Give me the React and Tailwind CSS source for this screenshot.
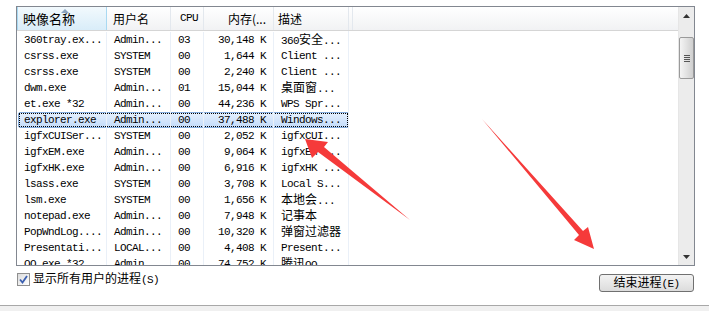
import React from 'react';

const MONO = "font-['Liberation_Mono','Noto_Sans_CJK_SC',monospace]";
const CJK = "font-['Noto_Sans_CJK_SC',sans-serif]";

// split text into latin / CJK runs so each gets its own font size
function Txt({ s }) {
  const parts = s.split(/([\u4e00-\u9fff]+)/);
  return parts.map((p, i) =>
    /[\u4e00-\u9fff]/.test(p) ? (
      <span key={i} className={`${CJK} text-[12px] tracking-normal`}>{p}</span>
    ) : (
      <span key={i}>{p}</span>
    )
  );
}

const rows = [
  ['360tray.ex...', 'Admin...', '03', '30,148 K', '360安全...'],
  ['csrss.exe', 'SYSTEM', '00', '1,644 K', 'Client ...'],
  ['csrss.exe', 'SYSTEM', '00', '2,240 K', 'Client ...'],
  ['dwm.exe', 'Admin...', '01', '15,044 K', '桌面窗...'],
  ['et.exe *32', 'Admin...', '00', '44,236 K', 'WPS Spr...'],
  ['explorer.exe', 'Admin...', '00', '37,488 K', 'Windows...'],
  ['igfxCUISer...', 'SYSTEM', '00', '2,052 K', 'igfxCUI...'],
  ['igfxEM.exe', 'Admin...', '00', '9,064 K', 'igfxEM ...'],
  ['igfxHK.exe', 'Admin...', '00', '6,916 K', 'igfxHK ...'],
  ['lsass.exe', 'SYSTEM', '00', '3,708 K', 'Local S...'],
  ['lsm.exe', 'SYSTEM', '00', '1,656 K', '本地会...'],
  ['notepad.exe', 'Admin...', '00', '7,948 K', '记事本'],
  ['PopWndLog....', 'Admin...', '00', '10,320 K', '弹窗过滤器'],
  ['Presentati...', 'LOCAL...', '00', '4,408 K', 'Present...'],
  ['QQ.exe *32', 'Admin...', '00', '74,752 K', '腾讯QQ'],
];

function Row({ r, selected }) {
  return (
    <div className="relative flex h-[16px] shrink-0 items-center text-[11px] tracking-[-0.6px] text-black">
      {selected && (
        <div className="absolute left-[1px] top-0 h-[16px] w-[331px] rounded-[2px] border border-[#84acdd] bg-linear-to-b from-[#e4effd] to-[#c4dcfa]">
          <div className="h-full w-full border border-dotted border-black" />
        </div>
      )}
      <div className="relative w-[90px] shrink-0 border-r border-[#eaf0f8] pl-[7px] leading-[16px]"><Txt s={r[0]} /></div>
      <div className="relative w-[64px] shrink-0 border-r border-[#eaf0f8] pl-[7px] leading-[16px]">{r[1]}</div>
      <div className="relative w-[33px] shrink-0 border-r border-[#eaf0f8] pl-[7px] leading-[16px]">{r[2]}</div>
      <div className="relative w-[70px] shrink-0 border-r border-[#eaf0f8] pr-[7px] text-right leading-[16px]">{r[3]}</div>
      <div className="relative w-[75px] shrink-0 border-r border-[#eaf0f8] pl-[7px] leading-[16px] whitespace-nowrap"><Txt s={r[4]} /></div>
    </div>
  );
}

function Head({ w, children, sorted, cls = '' }) {
  return (
    <div
      className={`relative flex h-full shrink-0 items-center border-r ${
        sorted
          ? 'border-l border-[#a9d9f2] bg-linear-to-b from-[#f2f9fd] to-[#d9edf9]'
          : 'border-[#e3e8ee]'
      } ${w} ${cls}`}
    >
      {sorted && (
        <svg className="absolute left-[43px] top-[1px]" width="8" height="5" viewBox="0 0 8 5">
          <path d="M0 5 L4 1 L8 5 Z" fill="#8aa3bf" />
        </svg>
      )}
      {children}
    </div>
  );
}

function Scrollbar() {
  return (
    <div className="flex w-[16px] shrink-0 flex-col bg-[#ececec] border-l border-[#e6e6e6]">
      <div className="flex h-[17px] shrink-0 items-center justify-center">
        <svg width="7" height="4" viewBox="0 0 7 4"><path d="M0 4 L3.5 0 L7 4 Z" fill="#333" /></svg>
      </div>
      <div className="mx-[0px] mt-[13px] flex h-[42px] shrink-0 flex-col items-center justify-center gap-[1px] rounded-[2px] border border-[#9a9a9a] bg-linear-to-r from-[#f4f4f4] via-[#e2e2e2] to-[#cfcfcf]">
        <div className="h-[1px] w-[6px] bg-[#555]" />
        <div className="h-[1px] w-[6px] bg-[#555]" />
        <div className="h-[1px] w-[6px] bg-[#555]" />
        <div className="h-[1px] w-[6px] bg-[#555]" />
      </div>
      <div className="flex-1" />
      <div className="flex h-[17px] shrink-0 items-center justify-center">
        <svg width="7" height="4" viewBox="0 0 7 4"><path d="M0 0 L3.5 4 L7 0 Z" fill="#333" /></svg>
      </div>
    </div>
  );
}

export default function App() {
  return (
    <div className="relative flex h-[311px] w-[709px] flex-col overflow-hidden bg-white">
      {/* process list */}
      <div className="ml-[16px] mt-[6px] flex h-[260px] w-[679px] border border-[#828790] bg-white">
        <div className="flex flex-1 flex-col overflow-hidden">
          <div className="flex h-[24px] shrink-0 border-b border-[#d5d5d5] bg-linear-to-b from-white to-[#f1f2f4] text-[12px] text-black">
            <Head w="w-[90px]" sorted cls={`${CJK} pl-[5px] text-[13px]`}>映像名称</Head>
            <Head w="w-[64px]" cls={`${CJK} pl-[6px]`}>用户名</Head>
            <Head w="w-[33px]" cls={`${MONO} pl-[9px] text-[11px] tracking-[-0.6px]`}>CPU</Head>
            <Head w="w-[70px]" cls={`${CJK} justify-end pr-[7px]`}>内存(...</Head>
            <Head w="w-[75px]" cls={`${CJK} pl-[4px]`}>描述</Head>
            <div className="h-full w-[4px] border-r border-[#e3e8ee]" />
          </div>
          <div className={`flex flex-col pt-[1px] ${MONO}`}>
            {rows.map((r, i) => (
              <Row key={i} r={r} selected={i === 5} />
            ))}
          </div>
        </div>
        <Scrollbar />
      </div>

      {/* options + end task */}
      <div className="flex h-[39px] shrink-0 items-start justify-between pl-[17px] pr-[15px]">
        <div className="mt-[5px] flex items-center gap-[3px]">
          <div className="flex h-[13px] w-[13px] items-center justify-center border border-[#8f8f8f] bg-linear-to-br from-[#dcdcdc] to-white">
            <svg width="9" height="9" viewBox="0 0 9 9">
              <path d="M1 4.5 L3.5 7.5 L8 1" stroke="#3b5fb0" strokeWidth="1.8" fill="none" />
            </svg>
          </div>
          <span className={`${CJK} text-[12px] leading-[14px] text-black`}>
            显示所有用户的进程<span className={`${MONO} text-[11px] tracking-[-0.6px]`}>(S)</span>
          </span>
        </div>
        <button className="mt-[8px] flex h-[18px] w-[95px] items-center justify-center rounded-[3px] border border-[#707070] bg-linear-to-b from-[#f3f3f3] to-[#dcdcdc] text-black">
          <span className={`${CJK} text-[12px] leading-[14px]`}>
            结束进程<span className={`${MONO} text-[11px] tracking-[-0.6px]`}>(E)</span>
          </span>
        </button>
      </div>

      <div className="flex-1 border-t border-[#a8a8a8] bg-[#f0f0f0]" />

      {/* red annotation arrows */}
      <svg className="pointer-events-none absolute inset-0" width="709" height="311" viewBox="0 0 709 311">
        <polygon
          points="410,220 324,147 328,142 305,139 312,158 318,152"
          fill="#f53a3a"
        />
        <polygon
          points="482,119 583,231 588,227 594,249 574,240 579,235"
          fill="#f53a3a"
        />
      </svg>
    </div>
  );
}
